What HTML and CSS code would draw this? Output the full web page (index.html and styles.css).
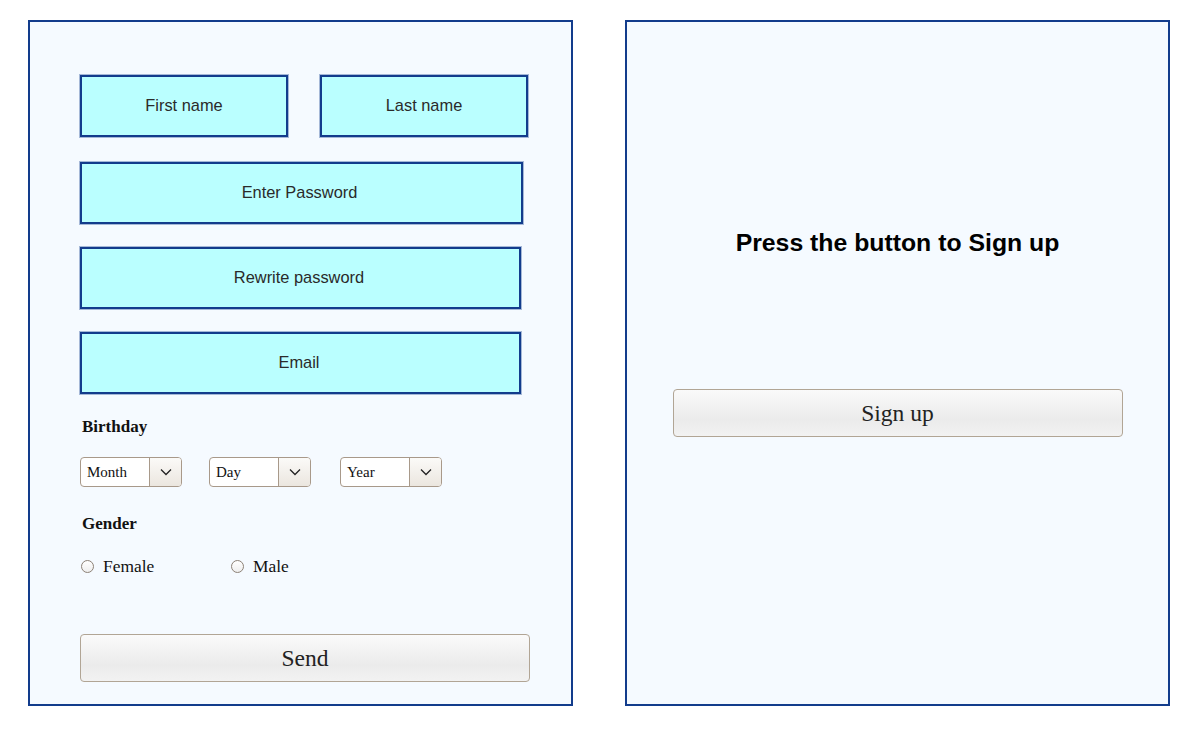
FILE: index.html
```html
<!DOCTYPE html>
<html lang="en">
<head>
<meta charset="utf-8">
<title>Sign up</title>
<link rel="stylesheet" href="styles.css">
</head>
<body>
<div class="page">
  <form class="panel form-panel">
    <div class="name-row">
      <div class="field field-half">First name</div>
      <div class="field field-half">Last name</div>
    </div>
    <div class="field field-pw">Enter Password</div>
    <div class="field field-wide">Rewrite password</div>
    <div class="field field-wide">Email</div>

    <div class="label label-birthday">Birthday</div>
    <div class="select-row">
      <div class="select"><span class="select-value">Month</span><span class="select-btn"><svg width="12" height="8" viewBox="0 0 12 8"><path d="M1 1.5 L6 6.5 L11 1.5" fill="none" stroke="#222" stroke-width="1.3"/></svg></span></div>
      <div class="select"><span class="select-value">Day</span><span class="select-btn"><svg width="12" height="8" viewBox="0 0 12 8"><path d="M1 1.5 L6 6.5 L11 1.5" fill="none" stroke="#222" stroke-width="1.3"/></svg></span></div>
      <div class="select"><span class="select-value">Year</span><span class="select-btn"><svg width="12" height="8" viewBox="0 0 12 8"><path d="M1 1.5 L6 6.5 L11 1.5" fill="none" stroke="#222" stroke-width="1.3"/></svg></span></div>
    </div>

    <div class="label label-gender">Gender</div>
    <div class="radio-row">
      <label class="radio"><span class="radio-dot"></span>Female</label>
      <label class="radio"><span class="radio-dot"></span>Male</label>
    </div>

    <div class="btn btn-send">Send</div>
  </form>

  <div class="panel side-panel">
    <h2 class="side-title">Press the button to Sign up</h2>
    <div class="btn btn-signup">Sign up</div>
  </div>
</div>
</body>
</html>
```

FILE: styles.css
```css
html, body {
  margin: 0;
  padding: 0;
  background: #ffffff;
}

body {
  font-family: "Liberation Serif", "Times New Roman", serif;
  color: #111;
}

.page {
  display: flex;
  gap: 52px;
  padding: 20px 0 0 28px;
}

.panel {
  box-sizing: border-box;
  width: 545px;
  height: 686px;
  border: 2px solid #123c8c;
  background: #f5faff;
  margin: 0;
}

.form-panel {
  display: flex;
  flex-direction: column;
  align-items: flex-start;
  padding: 53px 0 0 50px;
}

.name-row {
  display: flex;
  gap: 32px;
}

.field {
  box-sizing: border-box;
  height: 62px;
  border: 2px solid #123c8c;
  background: #baffff;
  box-shadow: 0 0 0 1px rgba(18, 60, 140, 0.35);
  display: flex;
  align-items: center;
  justify-content: center;
  padding-bottom: 1px;
  font-family: "Liberation Sans", Arial, sans-serif;
  font-size: 16.4px;
  color: #2a2a2a;
}

.field-half {
  width: 208px;
}

.field-pw {
  width: 443px;
  margin-top: 25px;
  padding-right: 4px;
}

.field-wide {
  width: 441px;
  margin-top: 23px;
  padding-right: 3px;
}

.label {
  font-weight: bold;
  font-size: 17px;
  line-height: 20px;
  height: 20px;
  margin-left: 2px;
}

.label-birthday {
  margin-top: 23px;
}

.label-gender {
  margin-top: 27px;
}

.select-row {
  display: flex;
  margin-top: 20px;
}

.select {
  box-sizing: border-box;
  width: 102px;
  height: 30px;
  border: 1px solid #a8998a;
  border-radius: 4px;
  background: #ffffff;
  display: flex;
  overflow: hidden;
  margin-right: 27px;
}

.select:nth-child(2) {
  margin-right: 29px;
}

.select-value {
  flex: 0 0 69px;
  box-sizing: border-box;
  border-right: 1px solid #a8998a;
  padding-left: 6px;
  font-size: 15px;
  line-height: 28px;
  color: #111;
}

.select-btn {
  flex: 1;
  display: flex;
  align-items: center;
  justify-content: center;
  background: linear-gradient(#fbfaf8, #ebe6df);
}

.radio-row {
  display: flex;
  margin-top: 22px;
  height: 20px;
}

.radio {
  display: flex;
  align-items: center;
  font-size: 17.4px;
  line-height: 20px;
  color: #111;
  width: 150px;
  margin-left: 1px;
}

.radio + .radio {
  margin-left: 0;
}

.radio-dot {
  box-sizing: border-box;
  width: 13px;
  height: 13px;
  border: 1px solid #8c8176;
  border-radius: 50%;
  background: linear-gradient(#ffffff, #eeeeee);
  margin-right: 9px;
}

.btn {
  box-sizing: border-box;
  width: 450px;
  height: 48px;
  border: 1px solid #b1a595;
  border-radius: 4px;
  background: linear-gradient(#fafafa, #ebebeb 65%, #f2f2f2);
  display: flex;
  align-items: center;
  justify-content: center;
  font-family: "Liberation Serif", "Times New Roman", serif;
  font-size: 23.5px;
  color: #222;
}

.btn-send {
  margin-top: 58px;
}

.side-panel {
  display: flex;
  flex-direction: column;
  align-items: center;
}

.side-title {
  margin: 207px 0 0 0;
  font-family: "Liberation Sans", Arial, sans-serif;
  font-size: 24.8px;
  line-height: 28px;
  font-weight: bold;
  color: #000;
}

.btn-signup {
  margin-top: 132px;
}
```
